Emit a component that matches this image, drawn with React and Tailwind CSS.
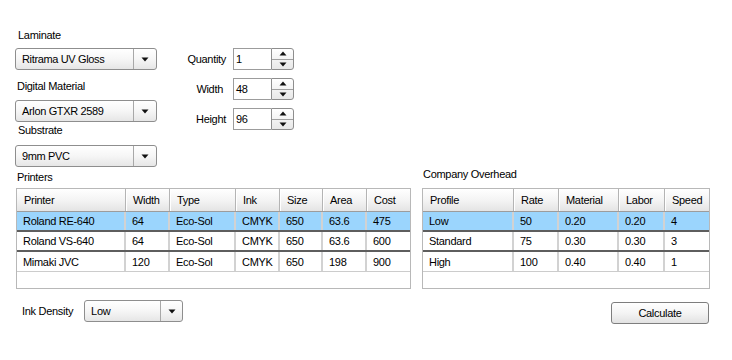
const font = { fontFamily: '"Liberation Sans", Arial, sans-serif' };

const DownArrow = () => (
  <svg width="8" height="5" viewBox="0 0 8 5">
    <path d="M0.5 0.5 H7.5 L4 4.5 Z" fill="#111" />
  </svg>
);

const UpArrow = () => (
  <svg width="8" height="5" viewBox="0 0 8 5">
    <path d="M0.5 4.5 H7.5 L4 0.5 Z" fill="#111" />
  </svg>
);

const Combo = ({ value, width = "w-[142px]", btn = "w-[23px]" }) => (
  <div
    className={`${width} h-[22px] flex border border-[#8e8e8e] rounded-[3px] bg-gradient-to-b from-white via-[#f6f6f6] to-[#e6e6e6]`}
  >
    <div className="flex-1 flex items-center pl-[6px] tracking-[-0.35px] text-black">{value}</div>
    <div className={`${btn} border-l border-[#a8a8a8] flex items-center justify-center`}>
      <DownArrow />
    </div>
  </div>
);

const Spinner = ({ label, value, pr }) => (
  <div className="flex items-center h-[22px]">
    <div className={`w-[69px] text-right ${pr} tracking-[-0.3px] text-black`}>{label}</div>
    <div className="ml-[7px] flex h-[22px]">
      <div className="w-[38px] h-full border border-[#9c9c9c] border-r-0 bg-white flex items-center pl-[2px] tracking-[-0.3px] text-black">
        {value}
      </div>
      <div className="w-[23px] h-full border border-[#8e8e8e] rounded-r-[3px] flex flex-col bg-gradient-to-b from-white to-[#e8e8e8]">
        <div className="flex-1 flex items-center justify-center border-b border-[#a0a0a0]">
          <UpArrow />
        </div>
        <div className="flex-1 flex items-center justify-center">
          <DownArrow />
        </div>
      </div>
    </div>
  </div>
);

const Table = ({ width, cols, rows }) => (
  <div className={`${width} border border-[#b8b8b8] bg-white`}>
    <div className="flex h-[23px] border-b border-[#9c9c9c] bg-gradient-to-b from-white via-[#f4f4f4] to-[#e4e4e4]">
      {cols.map((c, i) => (
        <div
          key={c.name}
          className={`${c.w} ${i === cols.length - 1 ? "flex-1" : "border-r border-[#b4b4b4] shadow-[1px_0_0_#fff]"} flex items-center pl-[7px] tracking-[-0.3px] text-black`}
        >
          {c.name}
        </div>
      ))}
    </div>
    {rows.map((r, ri) => (
      <div
        key={ri}
        className={`flex h-[20px] ${ri === 0 ? "bg-[#9bd5fd]" : "bg-white"} ${ri < rows.length - 1 ? "border-b-2 border-[#5e5e5e]" : "border-b border-[#cccccc]"}`}
      >
        {r.map((v, i) => (
          <div
            key={i}
            className={`${cols[i].w} ${i === cols.length - 1 ? "flex-1" : "border-r-2 border-[#d2d2d2]"} flex items-center pl-[6px] tracking-[-0.3px] text-black`}
          >
            {v}
          </div>
        ))}
      </div>
    ))}
    <div className="h-[16px]" />
  </div>
);

const printerCols = [
  { name: "Printer", w: "w-[109px]" },
  { name: "Width", w: "w-[44px]" },
  { name: "Type", w: "w-[66px]" },
  { name: "Ink", w: "w-[44px]" },
  { name: "Size", w: "w-[43px]" },
  { name: "Area", w: "w-[44px]" },
  { name: "Cost", w: "w-[43px]" },
];

const printerRows = [
  ["Roland RE-640", "64", "Eco-Sol", "CMYK", "650", "63.6", "475"],
  ["Roland VS-640", "64", "Eco-Sol", "CMYK", "650", "63.6", "600"],
  ["Mimaki JVC", "120", "Eco-Sol", "CMYK", "650", "198", "900"],
];

const overheadCols = [
  { name: "Profile", w: "w-[91px]" },
  { name: "Rate", w: "w-[45px]" },
  { name: "Material", w: "w-[60px]" },
  { name: "Labor", w: "w-[46px]" },
  { name: "Speed", w: "w-[46px]" },
];

const overheadRows = [
  ["Low", "50", "0.20", "0.20", "4"],
  ["Standard", "75", "0.30", "0.30", "3"],
  ["High", "100", "0.40", "0.40", "1"],
];

export default function App() {
  return (
    <div className="w-[732px] h-[360px] bg-white text-[11px] leading-[14px] text-black" style={font}>
      <div className="flex pt-[28px] pl-[15px]">
        <div className="w-[142px] flex flex-col">
          <div className="pl-[3px] tracking-[-0.3px]">Laminate</div>
          <div className="mt-[6px]">
            <Combo value="Ritrama UV Gloss" />
          </div>
          <div className="mt-[9px] pl-[2px] tracking-[-0.3px]">Digital Material</div>
          <div className="mt-[7px]">
            <Combo value="Arlon GTXR 2589" />
          </div>
          <div className="mt-[1px] pl-[3px] tracking-[-0.3px]">Substrate</div>
          <div className="mt-[8px]">
            <Combo value="9mm PVC" />
          </div>
        </div>
        <div className="flex flex-col gap-[8px] pt-[20px]">
          <Spinner label="Quantity" value="1" pr="pr-0" />
          <Spinner label="Width" value="48" pr="pr-[3px]" />
          <Spinner label="Height" value="96" pr="pr-0" />
        </div>
      </div>

      <div className="flex pl-[16px]">
        <div className="flex flex-col">
          <div className="mt-[3px] mb-[4px] pl-[1px] tracking-[-0.3px]">Printers</div>
          <Table width="w-[395px]" cols={printerCols} rows={printerRows} />
        </div>
        <div className="ml-[11px] flex flex-col">
          <div className="mb-[7px] pl-[1px] tracking-[-0.3px]">Company Overhead</div>
          <Table width="w-[288px]" cols={overheadCols} rows={overheadRows} />
        </div>
      </div>

      <div className="flex items-start mt-[11px] pl-[22px] pr-[23px]">
        <div className="h-[22px] flex items-center tracking-[-0.3px]">Ink Density</div>
        <div className="ml-[11px]">
          <Combo value="Low" width="w-[99px]" btn="w-[22px]" />
        </div>
        <button
          type="button"
          className="ml-auto mt-[2px] w-[98px] h-[22px] border border-[#7e7e7e] rounded-[3px] bg-gradient-to-b from-white via-[#f4f4f4] to-[#e2e2e2] flex items-center justify-center tracking-[-0.3px] text-black"
        >
          Calculate
        </button>
      </div>
    </div>
  );
}
